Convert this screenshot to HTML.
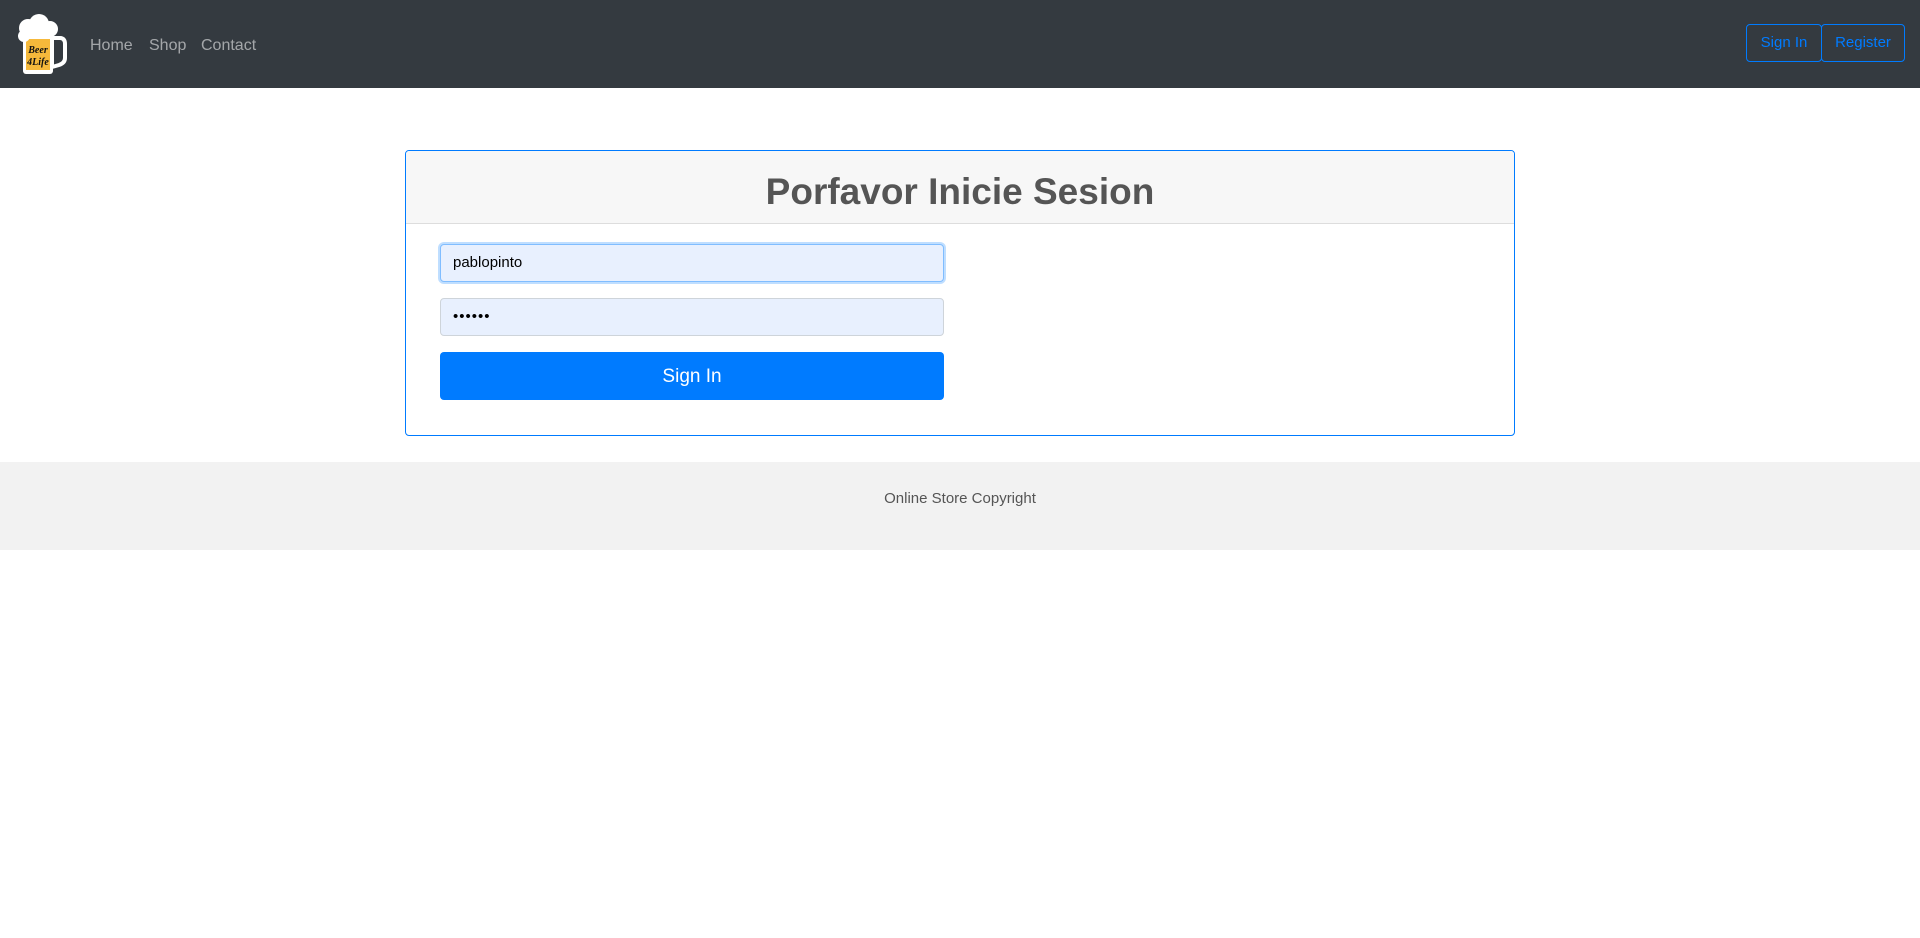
<!DOCTYPE html>
<html><head><meta charset="utf-8"><style>
*{box-sizing:border-box}
body{margin:0;width:1920px;height:938px;background:#fff;font-family:"Liberation Sans",sans-serif;font-size:16px;color:#212529;position:relative;overflow:hidden}
nav{position:absolute;left:0;top:0;width:1920px;height:88px;background:#343a40}
.nl{position:absolute;top:37px;color:rgba(255,255,255,.55);font-size:16px}
.ob{position:absolute;top:24px;height:38px;border:1px solid #007bff;border-radius:4px;color:#007bff;font-size:15px;line-height:36px;text-align:center}
.card{position:absolute;left:405px;top:150px;width:1110px;height:286px;border:1px solid #007bff;border-radius:4px;overflow:hidden}
.hd{height:73px;background:#f7f7f7;border-bottom:1px solid #ddd;text-align:center;font-size:37px;font-weight:600;color:#555;line-height:81px}
.in{position:absolute;left:34px;width:504px;height:38px;background:#e8f0fe;border:1px solid #ced4da;border-radius:4px;font-size:15px;line-height:36px;padding-left:12px;color:#000}
.btn{position:absolute;left:34px;top:201px;width:504px;height:48px;background:#007bff;border-radius:4px;color:#fff;font-size:19px;text-align:center;line-height:50px}
footer{position:absolute;left:0;top:462px;width:1920px;height:88px;background:#f2f2f2;text-align:center;line-height:74px;font-size:15px;color:#555}
</style></head><body>
<nav>
<svg style="position:absolute;left:14px;top:12px" width="54" height="64" viewBox="0 0 54 64">
<path d="M38 26h8c4 0 5 3 5 6v14c0 4-3 6-6 7l-7 2z" fill="none" stroke="#fff" stroke-width="4"/>
<rect x="9" y="20" width="30" height="42" rx="3" fill="#fff"/>
<rect x="12" y="27" width="24" height="31" fill="#f6b93b"/>
<circle cx="14" cy="16" r="9" fill="#fff"/><circle cx="25" cy="12" r="10" fill="#fff"/><circle cx="36" cy="17" r="8" fill="#fff"/><circle cx="10" cy="24" r="6" fill="#fff"/>
<text x="24" y="41" font-size="10" font-family="Liberation Serif" font-style="italic" font-weight="bold" text-anchor="middle" fill="#111">Beer</text>
<text x="24" y="53" font-size="10" font-family="Liberation Serif" font-style="italic" font-weight="bold" text-anchor="middle" fill="#111">4Life</text>
</svg>
<span class="nl" style="left:90px">Home</span>
<span class="nl" style="left:149px">Shop</span>
<span class="nl" style="left:201px">Contact</span>
<div class="ob" style="left:1746px;width:76px">Sign In</div>
<div class="ob" style="left:1821px;width:84px">Register</div>
</nav>
<div class="card">
<div class="hd">Porfavor Inicie Sesion</div>
<div class="in" style="top:93px;border-color:#80bdff;box-shadow:0 0 0 2px rgba(0,123,255,.25)">pablopinto</div>
<div class="in" style="top:147px;letter-spacing:1px">••••••</div>
<div class="btn">Sign In</div>
</div>
<footer>Online Store Copyright</footer>
</body></html>
